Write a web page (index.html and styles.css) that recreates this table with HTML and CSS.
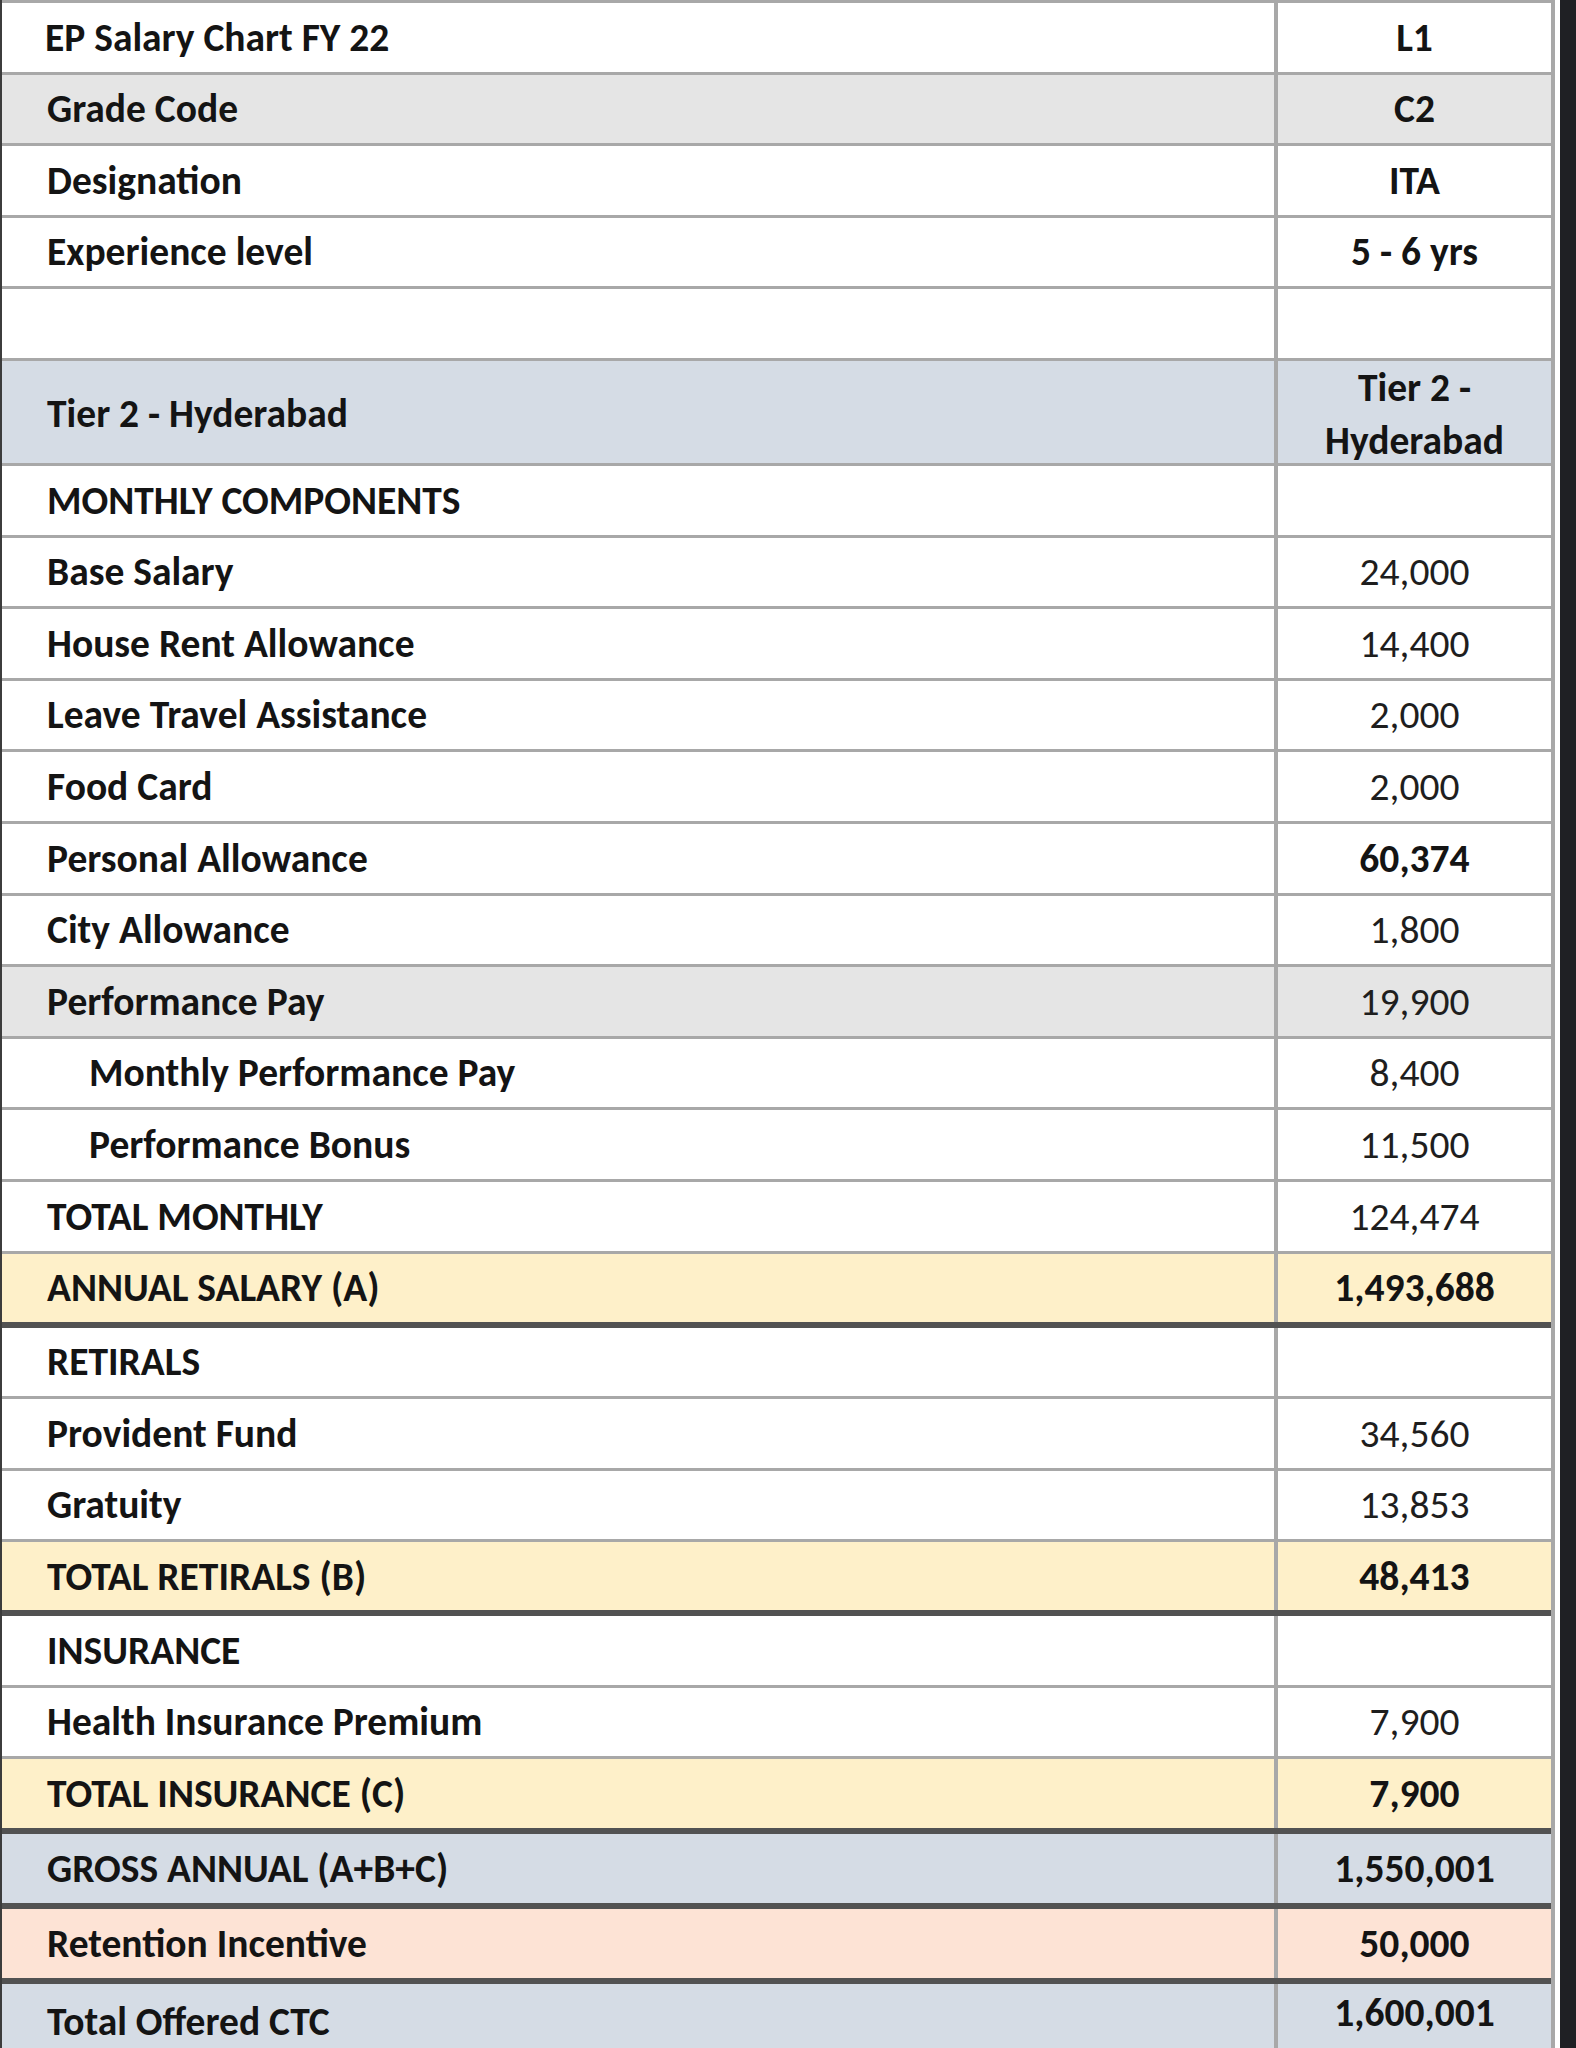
FILE: index.html
```html
<!DOCTYPE html>
<html lang="en">
<head>
<meta charset="utf-8">
<title>EP Salary Chart FY 22</title>
<link rel="stylesheet" href="styles.css">
</head>
<body>
<div class="page">
  <div class="sheet">
    <div class="row"><div class="cell label first">EP Salary Chart FY 22</div><div class="cell value b">L1</div></div>
    <div class="row gray"><div class="cell label">Grade Code</div><div class="cell value b">C2</div></div>
    <div class="row"><div class="cell label">Designation</div><div class="cell value b">ITA</div></div>
    <div class="row"><div class="cell label">Experience level</div><div class="cell value b">5 - 6 yrs</div></div>
    <div class="row"><div class="cell label"></div><div class="cell value"></div></div>
    <div class="row tall blue"><div class="cell label">Tier 2 - Hyderabad</div><div class="cell value b two">Tier 2 -<br>Hyderabad</div></div>
    <div class="row"><div class="cell label">MONTHLY COMPONENTS</div><div class="cell value"></div></div>
    <div class="row"><div class="cell label">Base Salary</div><div class="cell value">24,000</div></div>
    <div class="row"><div class="cell label">House Rent Allowance</div><div class="cell value">14,400</div></div>
    <div class="row"><div class="cell label">Leave Travel Assistance</div><div class="cell value">2,000</div></div>
    <div class="row"><div class="cell label">Food Card</div><div class="cell value">2,000</div></div>
    <div class="row"><div class="cell label">Personal Allowance</div><div class="cell value b">60,374</div></div>
    <div class="row"><div class="cell label">City Allowance</div><div class="cell value">1,800</div></div>
    <div class="row gray"><div class="cell label">Performance Pay</div><div class="cell value">19,900</div></div>
    <div class="row"><div class="cell label indent">Monthly Performance Pay</div><div class="cell value">8,400</div></div>
    <div class="row"><div class="cell label indent">Performance Bonus</div><div class="cell value">11,500</div></div>
    <div class="row"><div class="cell label">TOTAL MONTHLY</div><div class="cell value">124,474</div></div>
    <div class="row thick short yellow"><div class="cell label">ANNUAL SALARY (A)</div><div class="cell value b">1,493,688</div></div>
    <div class="row"><div class="cell label">RETIRALS</div><div class="cell value"></div></div>
    <div class="row"><div class="cell label">Provident Fund</div><div class="cell value">34,560</div></div>
    <div class="row"><div class="cell label">Gratuity</div><div class="cell value">13,853</div></div>
    <div class="row thick short yellow"><div class="cell label">TOTAL RETIRALS (B)</div><div class="cell value b">48,413</div></div>
    <div class="row"><div class="cell label">INSURANCE</div><div class="cell value"></div></div>
    <div class="row"><div class="cell label">Health Insurance Premium</div><div class="cell value">7,900</div></div>
    <div class="row thick yellow"><div class="cell label">TOTAL INSURANCE (C)</div><div class="cell value b">7,900</div></div>
    <div class="row thick blue"><div class="cell label">GROSS ANNUAL (A+B+C)</div><div class="cell value b">1,550,001</div></div>
    <div class="row thick peach"><div class="cell label">Retention Incentive</div><div class="cell value b">50,000</div></div>
    <div class="row last blue"><div class="cell label">Total Offered CTC</div><div class="cell value b top">1,600,001</div></div>
  </div>
</div>
</body>
</html>
```

FILE: styles.css
```css
* {
  box-sizing: border-box;
}

html,
body {
  margin: 0;
  padding: 0;
}

body {
  background: #1f2024;
  font-family: Carlito, Calibri, Lato, "Liberation Sans", sans-serif;
  color: #141414;
  overflow: hidden;
}

.page {
  width: 1560px;
  min-height: 2048px;
  background: #ffffff;
  border-left: 2px solid #3c3c3c;
  padding-right: 5px;
}

.sheet {
  border-top: 3px solid #a8a8a8;
  border-right: 4px solid #a8a8a8;
}

.row {
  display: grid;
  grid-template-columns: 1276px 1fr;
  height: 71.6px;
  border-bottom: 3px solid #a8a8a8;
}

.row.tall {
  height: 105px;
}

.row.thick {
  height: 75px;
  border-bottom: 6px solid #525252;
}

.row.thick.short {
  height: 74px;
}

.row.last {
  height: 78px;
}

.gray {
  background: #e5e5e5;
}

.blue {
  background: #d5dce5;
}

.yellow {
  background: #fef0c9;
}

.peach {
  background: #fde3d5;
}

.cell {
  display: flex;
  align-items: center;
  font-size: 39.5px;
  font-weight: 700;
  line-height: 1.2;
  white-space: nowrap;
}

.label {
  padding-left: 45px;
  border-right: 4px solid #a8a8a8;
}

.label.first {
  padding-left: 43px;
}

.label.indent {
  padding-left: 87px;
}

.value {
  justify-content: center;
  text-align: center;
  font-weight: 400;
  color: #1e1e1e;
}

.value.b {
  font-weight: 700;
  color: #141414;
}

.value.two {
  line-height: 53px;
}

.value.top {
  align-items: flex-start;
  padding-top: 5px;
}
```
